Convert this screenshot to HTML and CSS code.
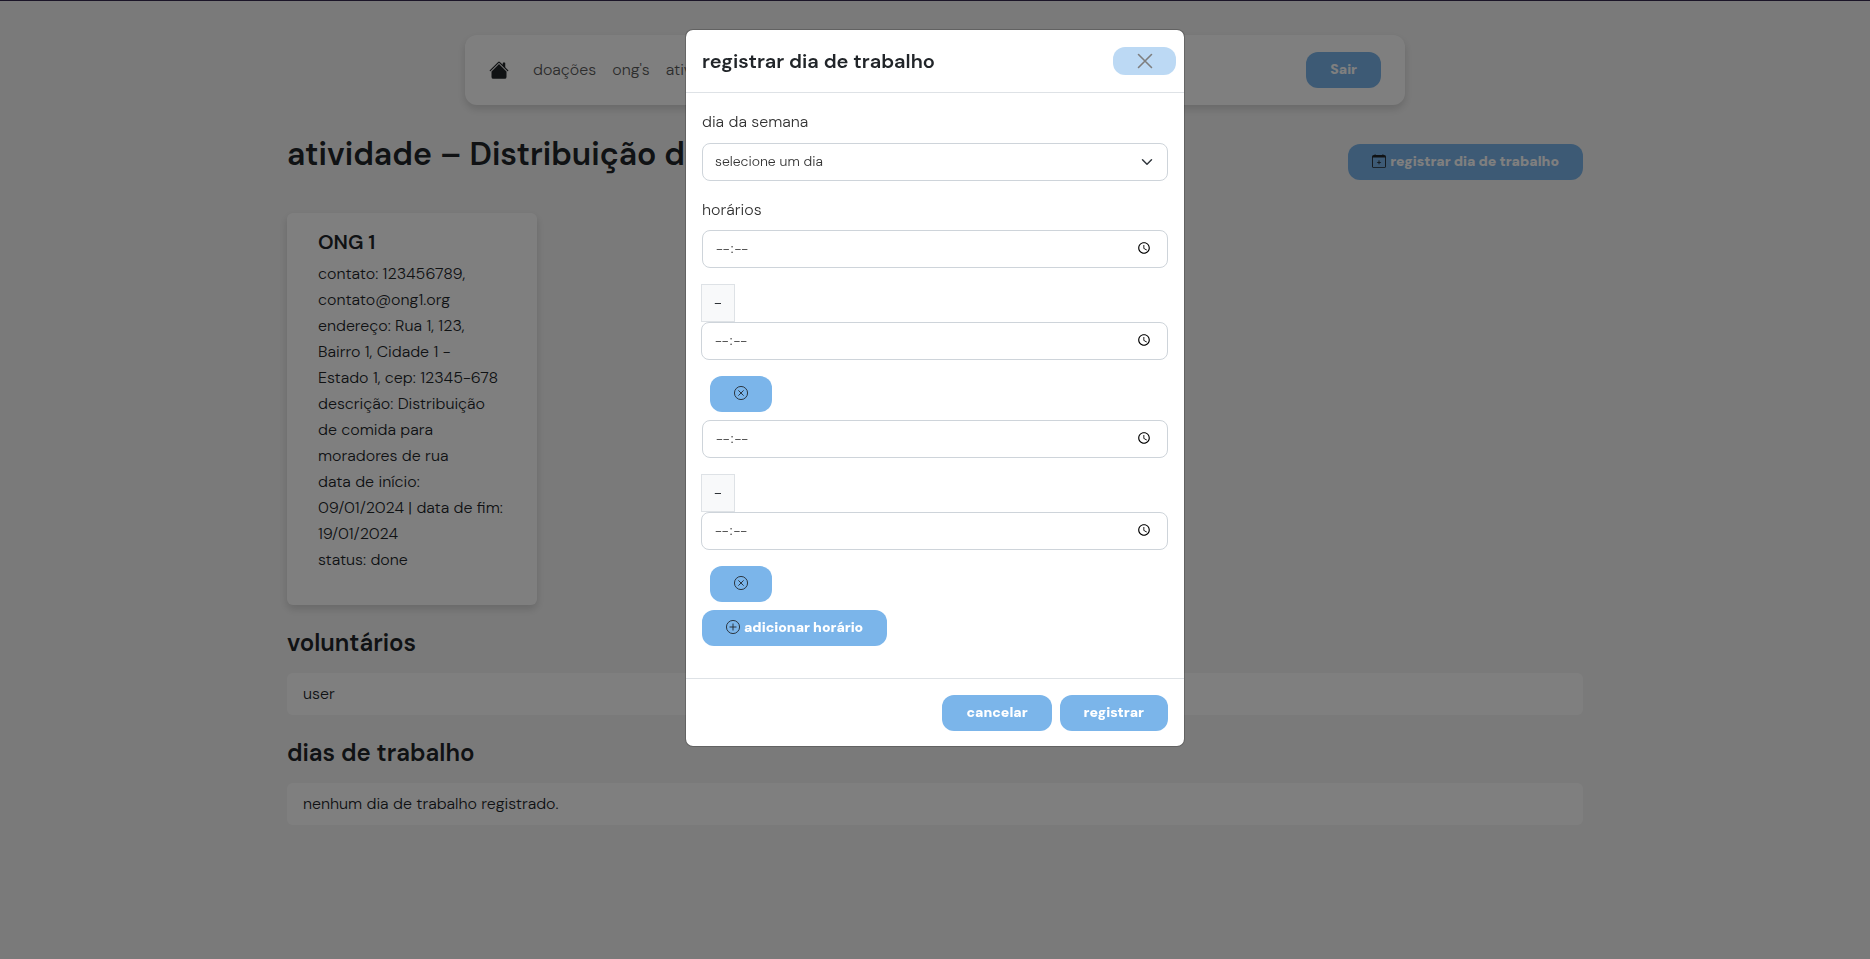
FILE: index.html
```html
<!DOCTYPE html>
<html lang="pt-BR">
<head>
<meta charset="utf-8">
<meta name="viewport" content="width=device-width, initial-scale=1">
<title>atividade</title>
<link rel="stylesheet" href="styles.css">
</head>
<body>
<nav class="navbar">
  <a class="brand" href="#" aria-label="início"><svg width="20" height="20" viewBox="0 0 16 16" fill="currentColor"><path d="M8.707 1.5a1 1 0 0 0-1.414 0L.646 8.146a.5.5 0 0 0 .708.708L8 2.207l6.646 6.647a.5.5 0 0 0 .708-.708L13 5.793V2.500a.5.5 0 0 0-.5-.5h-1a.5.5 0 0 0-.5.5v1.293z"/><path d="m8 3.293 6 6V13.500a1.500 1.500 0 0 1-1.500 1.500h-9A1.500 1.500 0 0 1 2 13.500V9.293z"/></svg></a>
  <a class="nav-link" href="#">doações</a>
  <a class="nav-link" href="#">ong's</a>
  <a class="nav-link" href="#">atividades</a>
  <button class="btn nav-exit" type="button">Sair</button>
</nav>

<main class="container">
  <header class="page-header">
    <h1>atividade – Distribuição de comida</h1>
    <button class="btn" type="button"><svg width="14" height="14" viewBox="0 0 16 16" fill="#212529"><path d="M8 7a.5.5 0 0 1 .5.5V9H10a.5.5 0 0 1 0 1H8.500v1.500a.5.5 0 0 1-1 0V10H6a.5.5 0 0 1 0-1h1.500V7.500A.5.5 0 0 1 8 7"/><path d="M3.500 0a.5.5 0 0 1 .5.5V1h8V.5a.5.5 0 0 1 1 0V1h1a2 2 0 0 1 2 2v11a2 2 0 0 1-2 2H2a2 2 0 0 1-2-2V3a2 2 0 0 1 2-2h1V.5a.5.5 0 0 1 .5-.5M1 4v10a1 1 0 0 0 1 1h12a1 1 0 0 0 1-1V4z"/></svg> registrar dia de trabalho</button>
  </header>

  <article class="card">
    <h2 class="card-title">ONG 1</h2>
    <p>contato: 123456789,<br>contato@ong1.org</p>
    <p>endereço: Rua 1, 123,<br>Bairro 1, Cidade 1 -<br>Estado 1, cep: 12345-678</p>
    <p>descrição: Distribuição<br>de comida para<br>moradores de rua</p>
    <p>data de início:<br>09/01/2024 | data de fim:<br>19/01/2024</p>
    <p>status: done</p>
  </article>

  <h2 class="section-title">voluntários</h2>
  <ul class="list"><li>user</li></ul>
  <h2 class="section-title">dias de trabalho</h2>
  <p class="list">nenhum dia de trabalho registrado.</p>
</main>

<div class="backdrop">
  <div class="modal" role="dialog" aria-modal="true" aria-labelledby="modal-title">
    <header class="modal-header">
      <h2 id="modal-title">registrar dia de trabalho</h2>
      <button class="close" type="button" aria-label="fechar"><svg width="16" height="16" viewBox="0 0 16 16"><path d="M1.500 1.500l13 13M14.500 1.500l-13 13" stroke="#000" stroke-width="1.600" stroke-linecap="round"/></svg></button>
    </header>
    <form class="modal-body">
      <label for="dia">dia da semana</label>
      <select class="control select" id="dia"><option>selecione um dia</option></select>
      <label for="inicio-1">horários</label>
      <div class="slot">
        <input class="control" type="time" id="inicio-1">
        <div class="slot-end">
          <span class="dash">-</span>
          <input class="control" type="time" aria-label="fim do horário 1">
        </div>
        <button class="btn remove" type="button" aria-label="remover horário 1"><svg width="14" height="14" viewBox="0 0 16 16" fill="none" stroke="#212529"><circle cx="8" cy="8" r="7.500"/><path d="M5 5l6 6M11 5l-6 6"/></svg></button>
      </div>
      <div class="slot">
        <input class="control" type="time" aria-label="início do horário 2">
        <div class="slot-end">
          <span class="dash">-</span>
          <input class="control" type="time" aria-label="fim do horário 2">
        </div>
        <button class="btn remove" type="button" aria-label="remover horário 2"><svg width="14" height="14" viewBox="0 0 16 16" fill="none" stroke="#212529"><circle cx="8" cy="8" r="7.500"/><path d="M5 5l6 6M11 5l-6 6"/></svg></button>
      </div>
      <button class="btn add" type="button"><svg width="14" height="14" viewBox="0 0 16 16" fill="none" stroke="#212529"><circle cx="8" cy="8" r="7.500"/><path d="M8 4v8M4 8h8"/></svg> adicionar horário</button>
    </form>
    <footer class="modal-footer">
      <button class="btn" type="button">cancelar</button>
      <button class="btn" type="button">registrar</button>
    </footer>
  </div>
</div>
</body>
</html>
```

FILE: styles.css
```css
* { box-sizing: border-box; }

body {
  margin: 0;
  min-height: 100vh;
  padding: 35px 16px 0;
  background: #f5f5f5;
  color: #212529;
  font: 300 16px/26px "DM Sans", Inter, "Liberation Sans", sans-serif;
}

h1, h2, p, ul { margin: 0; padding: 0; }
h1, h2 { font-weight: 600; }

.btn {
  display: inline-flex;
  align-items: center;
  justify-content: center;
  gap: 4px;
  height: 36px;
  padding: 0 24px 2px;
  border: 0;
  border-radius: 12px;
  background: #7bb5ea;
  color: #fff;
  font: inherit;
  font-size: 14px;
  font-weight: 900;
  line-height: 20px;
  white-space: nowrap;
}

.navbar {
  display: flex;
  align-items: center;
  gap: 16px;
  max-width: 940px;
  height: 70px;
  margin: 0 auto;
  padding: 0 24px;
  border-radius: 12px;
  background: #fff;
  box-shadow: 0 4px 8px rgba(0, 0, 0, .15);
}
.brand { display: flex; margin-right: 8px; color: #212529; }
.nav-link { color: #5a5a5a; text-decoration: none; }
.nav-exit { margin-left: auto; }

.container { max-width: 1296px; margin: 0 auto; }

.page-header {
  display: flex;
  justify-content: space-between;
  align-items: flex-end;
  padding: 30px 0 33px;
}
h1 { padding-bottom: 7px; font-size: 32px; line-height: 38px; }

.card {
  width: 250px;
  padding: 16px 31px 32px;
  border-radius: 6px;
  background: #fff;
  box-shadow: 0 4px 8px rgba(0, 0, 0, .15);
  white-space: nowrap;
}
.card-title { padding-bottom: 6px; font-size: 20px; line-height: 26px; }

.section-title { margin: 24px 0 16px; font-size: 24px; line-height: 28px; }
.list {
  padding: 8px 16px;
  border-radius: 6px;
  background: #fff;
  list-style: none;
}

.backdrop {
  position: fixed;
  inset: 0;
  padding-top: 28px;
  border-top: 1px solid #1b1528;
  background: rgba(0, 0, 0, .5);
  overflow: auto;
}

.modal {
  max-width: 500px;
  margin: 0 auto;
  border: 1px solid rgba(0, 0, 0, .2);
  border-radius: 8px;
  background: #fff;
  background-clip: padding-box;
}
.modal-header {
  display: flex;
  align-items: center;
  justify-content: space-between;
  height: 63px;
  padding: 0 8px 0 16px;
  border-bottom: 1px solid #dee2e6;
}
.modal-header h2 { font-size: 20px; line-height: 30px; }
.close {
  display: flex;
  align-items: center;
  justify-content: center;
  width: 63px;
  height: 28px;
  padding: 0;
  border: 0;
  border-radius: 12px;
  background: #7bb5ea;
  opacity: .5;
}

.modal-body { padding: 16px 16px 32px; }
label { display: block; padding-bottom: 9px; color: #333; line-height: 25px; }
.select + label { padding-bottom: 8px; }

.control {
  display: block;
  width: 100%;
  height: 38px;
  margin: 0 0 16px;
  padding: 0 12px 2px;
  border: 1px solid #ced4da;
  border-radius: 8px;
  background-color: #fff;
  color: #333;
  font: inherit;
  font-size: 14px;
}
.select {
  appearance: none;
  background-image: url("data:image/svg+xml,%3Csvg xmlns='http://www.w3.org/2000/svg' viewBox='0 0 16 16'%3E%3Cpath fill='none' stroke='%23343a40' stroke-linecap='round' stroke-linejoin='round' stroke-width='2' d='m2 5 6 6 6-6'/%3E%3C/svg%3E");
  background-position: right 14px center;
  background-repeat: no-repeat;
  background-size: 12px 12px;
}
.control::-webkit-datetime-edit-ampm-field { display: none; }

.slot { display: flex; flex-direction: column; align-items: flex-start; margin-bottom: 8px; }
.slot-end { align-self: stretch; margin-left: -1px; }
.dash {
  display: block;
  width: 34px;
  height: 38px;
  border: 1px solid #dee2e6;
  background: #f8f9fa;
  line-height: 36px;
  text-align: center;
}
.remove { margin-left: 8px; }

.modal-footer {
  display: flex;
  justify-content: flex-end;
  gap: 8px;
  padding: 16px 16px 15px;
  border-top: 1px solid #dee2e6;
}
```
